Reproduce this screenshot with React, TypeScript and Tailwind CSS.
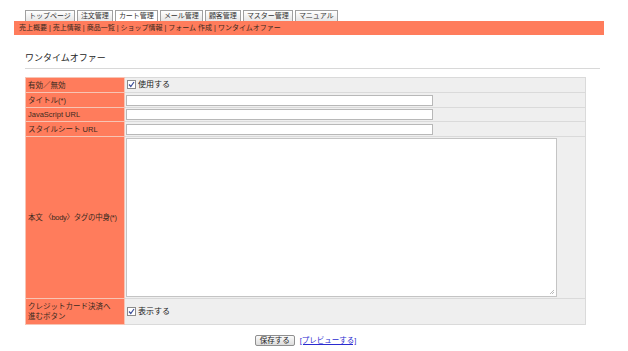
import React from 'react';

const TABS = ['トップページ', '注文管理', 'カート管理', 'メール管理', '顧客管理', 'マスター管理', 'マニュアル'];
const SUB = ['売上概要', '売上情報', '商品一覧', 'ショップ情報', 'フォーム 作成', 'ワンタイムオファー'];

function Check() {
  return (
    <span className="inline-flex w-[9px] h-[9px] border border-[#8a8a8a] bg-white items-center justify-center mr-[2px]">
      <svg width="7" height="7" viewBox="0 0 7 7">
        <path d="M1 3.5 L2.8 5.5 L6 1" stroke="#3b4f9a" strokeWidth="1.2" fill="none" />
      </svg>
    </span>
  );
}

export default function App() {
  const font = { fontFamily: '"Liberation Sans", "Noto Sans CJK JP", sans-serif' };
  return (
    <div className="w-[628px] h-[351px] bg-white text-[#222] overflow-hidden" style={font}>
      {/* header */}
      <div className="ml-[14px] w-[590px] pt-[10px]">
        <div className="flex gap-[2px] pl-[11px]">
          {TABS.map(t => (
            <div
              key={t}
              className={`h-[11px] px-[3px] border border-b-0 border-[#a0a0a0] text-[7px] leading-[10px] text-[#333] ${t === 'カート管理' ? 'bg-white' : 'bg-gradient-to-b from-white to-[#e6e6e6]'}`}
            >
              {t}
            </div>
          ))}
        </div>
        <div className="h-[14px] bg-[#ff7c5c] pl-[5px] text-[7px] leading-[13px] text-[#3a2a20]">
          {SUB.map((s, i) => (
            <span key={s}>
              {i > 0 && <span className="mx-[2px]">|</span>}
              {s}
            </span>
          ))}
        </div>
      </div>

      {/* content */}
      <div className="ml-[25px] w-[575px] mt-[17px]">
        <div className="text-[9px] leading-[12px] pb-[4px] border-b border-[#d8d8d8]">ワンタイムオファー</div>

        <table className="mt-[8px] w-[561px] border-collapse text-[7.5px] leading-[9px]">
          <tbody>
            <tr className="h-[15px]">
              <td className="w-[99px] bg-[#ff7c5c] border border-[#f7c4b4] pl-[2px] text-[#3a2a20]">有効／無効</td>
              <td className="bg-[#efefef] border border-[#dadada] pl-[2px]">
                <span className="inline-flex items-center text-[8px] leading-[9px]"><Check />使用する</span>
              </td>
            </tr>
            <tr className="h-[15px]">
              <td className="bg-[#ff7c5c] border border-[#f7c4b4] pl-[2px] text-[#3a2a20]">タイトル(*)</td>
              <td className="bg-[#efefef] border border-[#dadada] pl-[1px]">
                <div className="w-[307px] h-[11px] bg-white border border-[#b8b8b8]" />
              </td>
            </tr>
            <tr className="h-[14px]">
              <td className="bg-[#ff7c5c] border border-[#f7c4b4] pl-[2px] text-[#3a2a20]">JavaScript URL</td>
              <td className="bg-[#efefef] border border-[#dadada] pl-[1px]">
                <div className="w-[307px] h-[11px] bg-white border border-[#b8b8b8]" />
              </td>
            </tr>
            <tr className="h-[15px]">
              <td className="bg-[#ff7c5c] border border-[#f7c4b4] pl-[2px] text-[#3a2a20]">スタイルシート URL</td>
              <td className="bg-[#efefef] border border-[#dadada] pl-[1px]">
                <div className="w-[307px] h-[11px] bg-white border border-[#b8b8b8]" />
              </td>
            </tr>
            <tr className="h-[162px]">
              <td className="bg-[#ff7c5c] border border-[#f7c4b4] pl-[2px] text-[#3a2a20] whitespace-nowrap tracking-[-0.3px]">本文 〈body〉タグの中身(*)</td>
              <td className="bg-[#efefef] border border-[#dadada] pl-[1px]">
                <div className="relative w-[431px] h-[159px] bg-white border border-[#c4c4c4]">
                  <svg className="absolute right-[1px] bottom-[1px]" width="6" height="6" viewBox="0 0 6 6">
                    <path d="M5 1 L1 5 M5 3 L3 5" stroke="#aaa" strokeWidth="0.8" />
                  </svg>
                </div>
              </td>
            </tr>
            <tr className="h-[26px]">
              <td className="bg-[#ff7c5c] border border-[#f7c4b4] pl-[2px] text-[#3a2a20] leading-[10px]">
                クレジットカード決済へ<br />進むボタン
              </td>
              <td className="bg-[#efefef] border border-[#dadada] pl-[2px]">
                <span className="inline-flex items-center text-[8px] leading-[9px]"><Check />表示する</span>
              </td>
            </tr>
          </tbody>
        </table>

        <div className="w-[561px] flex justify-center items-center gap-[5px] mt-[10px]">
          <button className="h-[11px] px-[4px] text-[7.5px] leading-[9px] border border-[#8f8f8f] rounded-[2px] bg-gradient-to-b from-[#fafafa] to-[#dcdcdc]">
            保存する
          </button>
          <a className="text-[7.5px] text-[#2b2bd0] underline leading-[11px]">[プレビューする]</a>
        </div>
      </div>
    </div>
  );
}
